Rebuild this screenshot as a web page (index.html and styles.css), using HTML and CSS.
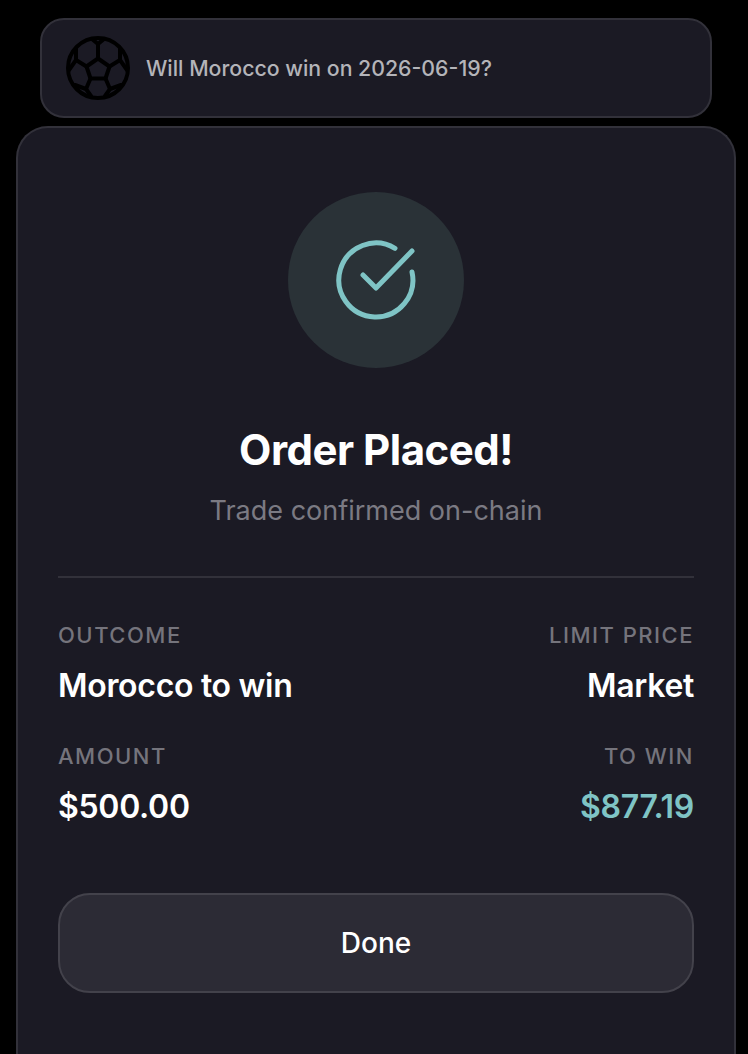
FILE: index.html
```html
<!DOCTYPE html>
<html lang="en">
<head>
    <meta charset="UTF-8">
    <meta name="viewport" content="width=device-width, initial-scale=1.0">
    <title>Order Placed</title>
    <link rel="stylesheet" href="styles.css">
</head>
<body>
    <div class="market">
        <svg class="market-icon" viewBox="0 0 64 64" fill="none" stroke="#000" stroke-width="4" stroke-linejoin="round" stroke-linecap="round">
            <circle cx="32" cy="32" r="30"/>
            <path d="M32 22.500 L43.500 30.500 L39.500 42.500 L24.500 42.500 L20.500 30.500 Z"/>
            <path d="M32 22.500 V8 M43.500 30.500 L54 24 M39.500 42.500 L44 53 M24.500 42.500 L20 53 M20.500 30.500 L10 24"/>
            <path d="M26 3 L32 8 L38 3 M54 24 L54 13 M54 24 L61 34 M44 53 L55 49 M44 53 L39 60 M20 53 L25 60 M20 53 L9 49 M10 24 L3 34 M10 24 L10 13"/>
        </svg>
        <p class="market-title">Will Morocco win on 2026-06-19?</p>
    </div>

    <div class="sheet">
        <div class="success-badge">
            <svg class="success-icon" viewBox="0 0 80 80" fill="none" stroke="#7fc4c5" stroke-width="5" stroke-linecap="round" stroke-linejoin="round">
                <path d="M59 8.300 A37 37 0 1 0 76 32"/>
                <path d="M27 35 L40 48 L76 11"/>
            </svg>
        </div>
        <h2 class="sheet-title">Order Placed!</h2>
        <p class="sheet-subtitle">Trade confirmed on-chain</p>

        <div class="details">
            <div class="detail">
                <span class="detail-label">OUTCOME</span>
                <span class="detail-value">Morocco to win</span>
            </div>
            <div class="detail detail-right">
                <span class="detail-label">LIMIT PRICE</span>
                <span class="detail-value">Market</span>
            </div>
            <div class="detail">
                <span class="detail-label">AMOUNT</span>
                <span class="detail-value">$500.00</span>
            </div>
            <div class="detail detail-right">
                <span class="detail-label">TO WIN</span>
                <span class="detail-value detail-win">$877.19</span>
            </div>
        </div>

        <button class="done-button" type="button">Done</button>
    </div>
</body>
</html>
```

FILE: styles.css
```css
* {
    box-sizing: border-box;
}
html,
body {
    height: 100%;
}
body {
    margin: 0;
    padding: 18px 12px 0 16px;
    background-color: #000;
    font-family: Inter, "Noto Sans", sans-serif;
    overflow: hidden;
}
.market {
    display: flex;
    align-items: center;
    gap: 16px;
    height: 100px;
    margin: 0 24px 8px 24px;
    padding: 0 24px;
    background-color: #1b1a24;
    border: 2px solid #32313a;
    border-radius: 24px;
}
.market-icon {
    width: 64px;
    height: 64px;
    flex-shrink: 0;
}
.market-title {
    margin: 0;
    color: #b4b4b9;
    font-size: 21.3px;
    font-weight: 500;
}
.sheet {
    height: 960px;
    padding: 64px 40px 0;
    background-color: #1b1a24;
    border: 2px solid #32313a;
    border-bottom: none;
    border-radius: 32px 32px 0 0;
    text-align: center;
}
.success-badge {
    display: flex;
    align-items: center;
    justify-content: center;
    width: 176px;
    height: 176px;
    margin: 0 auto;
    background-color: #2a3237;
    border-radius: 50%;
}
.success-icon {
    width: 80px;
    height: 80px;
}
.sheet-title {
    margin: 58px 0 0;
    color: #fff;
    font-size: 42px;
    line-height: 48px;
    font-weight: 700;
    letter-spacing: -0.5px;
}
.sheet-subtitle {
    margin: 22px 0 0;
    color: #7b7a83;
    font-size: 27px;
    line-height: 30px;
    font-weight: 400;
}
.details {
    display: grid;
    grid-template-columns: 1fr 1fr;
    row-gap: 40px;
    margin-top: 50px;
    padding-top: 45px;
    border-top: 2px solid #32313a;
}
.detail {
    display: flex;
    flex-direction: column;
    gap: 21px;
    text-align: left;
}
.detail-right {
    text-align: right;
}
.detail-label {
    color: #75747c;
    font-size: 22px;
    line-height: 24px;
    font-weight: 500;
    letter-spacing: 1.5px;
}
.detail-value {
    color: #fff;
    font-size: 32px;
    line-height: 36px;
    font-weight: 600;
    letter-spacing: -0.3px;
}
.detail-win {
    color: #7fc4c5;
}
.done-button {
    display: block;
    width: 100%;
    height: 100px;
    margin-top: 68px;
    background-color: #2c2b35;
    border: 2px solid #43424b;
    border-radius: 32px;
    color: #fff;
    font-family: inherit;
    font-size: 28px;
    font-weight: 500;
    cursor: pointer;
}
```
